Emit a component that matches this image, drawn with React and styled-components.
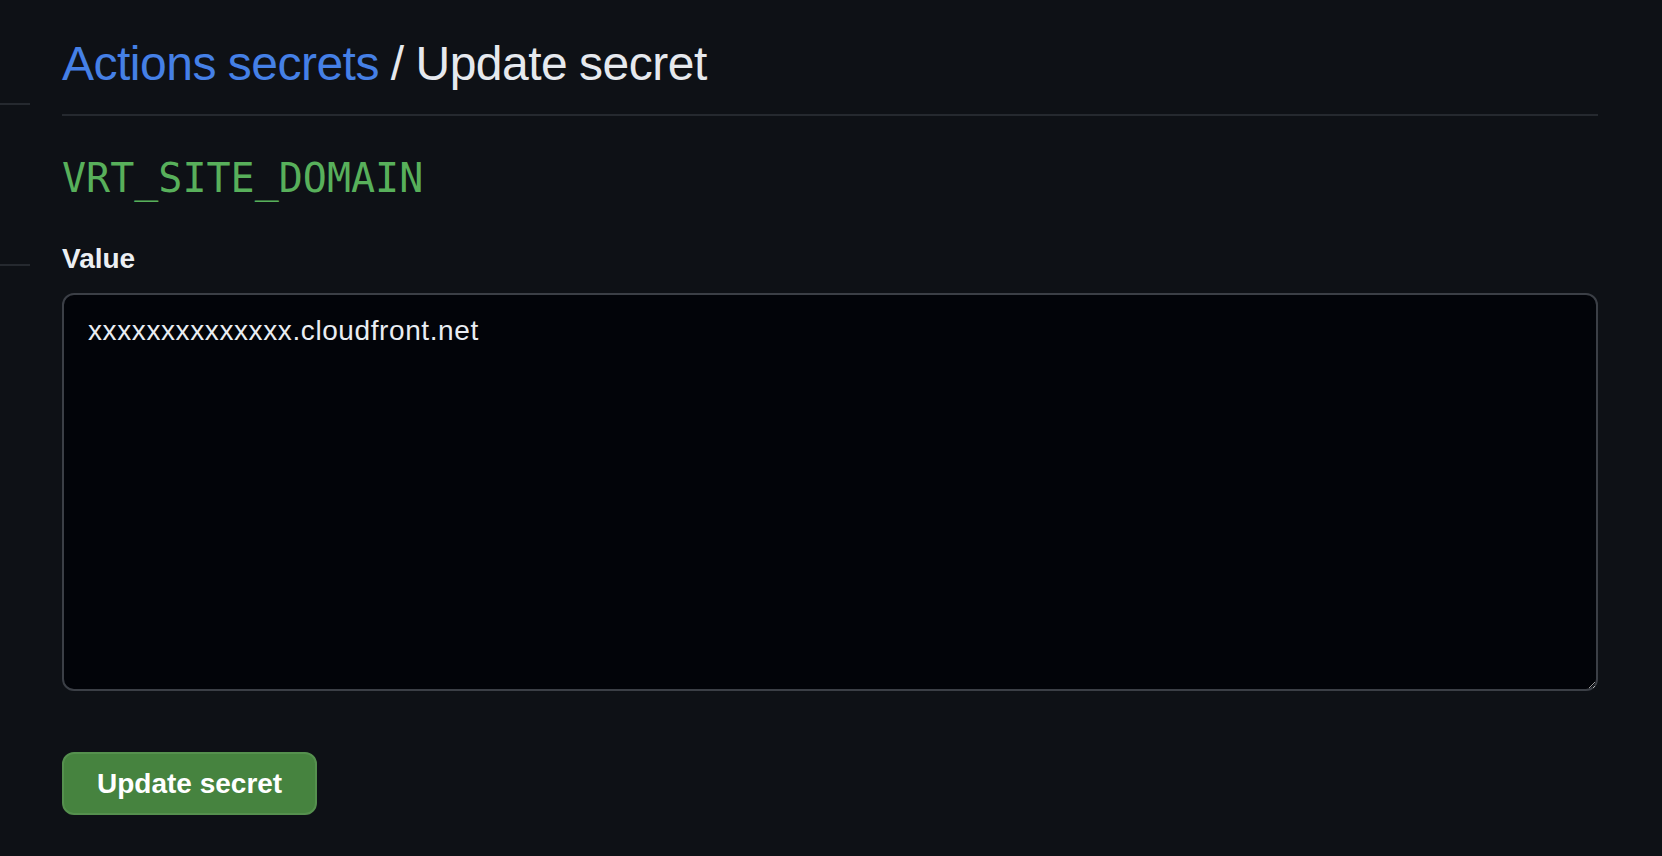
import React from "react";
import styled, { createGlobalStyle } from "styled-components";

const GlobalStyle = createGlobalStyle`
  html, body {
    margin: 0;
    padding: 0;
    background-color: #0e1116;
  }
  body {
    font-family: "Liberation Sans", Arial, sans-serif;
    color: #e6edf3;
  }
`;

const Page = styled.div`
  display: flex;
  min-height: 856px;
  background-color: #0e1116;
`;

const Sidebar = styled.nav`
  width: 30px;
  flex-shrink: 0;
`;

const SideGroup = styled.div`
  height: ${(props) => props.height}px;
  border-bottom: 2px solid #25292f;
`;

const Main = styled.main`
  width: 1536px;
  margin-left: 32px;
  padding-top: 28px;
`;

const Subhead = styled.div`
  padding-bottom: 14px;
  border-bottom: 2px solid #25292f;
`;

const Heading = styled.h2`
  margin: 0;
  font-size: 48px;
  line-height: 72px;
  font-weight: 400;
  letter-spacing: -0.5px;
  word-spacing: -1px;
  color: #e6e9ee;
`;

const Crumb = styled.a`
  color: #4580e6;
  text-decoration: none;
`;

const SecretName = styled.h3`
  margin: 32px 0 0;
  font-family: "DejaVu Sans Mono", "Liberation Mono", monospace;
  font-size: 40px;
  line-height: 60px;
  font-weight: 400;
  color: #58b05b;
`;

const Form = styled.form`
  display: flex;
  flex-direction: column;
  align-items: flex-start;
`;

const Label = styled.label`
  margin-top: 31px;
  margin-bottom: 14px;
  font-size: 28px;
  line-height: 40px;
  font-weight: 700;
  color: #eceff3;
`;

const TextArea = styled.textarea`
  box-sizing: border-box;
  width: 100%;
  height: 398px;
  margin: 0;
  padding: 16px 24px;
  font-family: "Liberation Sans", Arial, sans-serif;
  font-size: 28px;
  line-height: 40px;
  letter-spacing: 0.6px;
  color: #e9edf2;
  background-color: #020409;
  border: 2px solid #3b3f46;
  border-radius: 12px;
  outline: none;
  resize: vertical;
`;

const Button = styled.button`
  margin-top: 61px;
  padding: 9.5px 33px;
  font-family: "Liberation Sans", Arial, sans-serif;
  font-size: 28px;
  line-height: 40px;
  font-weight: 700;
  color: #ffffff;
  background-color: #46833f;
  border: 2px solid #55904e;
  border-radius: 12px;
  cursor: pointer;
`;

const App = () => (
  <Page>
    <GlobalStyle />
    <Sidebar>
      <SideGroup height={103} />
      <SideGroup height={159} />
    </Sidebar>
    <Main>
      <Subhead>
        <Heading>
          <Crumb href="#">Actions secrets</Crumb> / Update secret
        </Heading>
      </Subhead>
      <SecretName>VRT_SITE_DOMAIN</SecretName>
      <Form onSubmit={(e) => e.preventDefault()}>
        <Label htmlFor="secret_value">Value</Label>
        <TextArea
          id="secret_value"
          defaultValue="xxxxxxxxxxxxxx.cloudfront.net"
        />
        <Button type="submit">Update secret</Button>
      </Form>
    </Main>
  </Page>
);

export default App;
